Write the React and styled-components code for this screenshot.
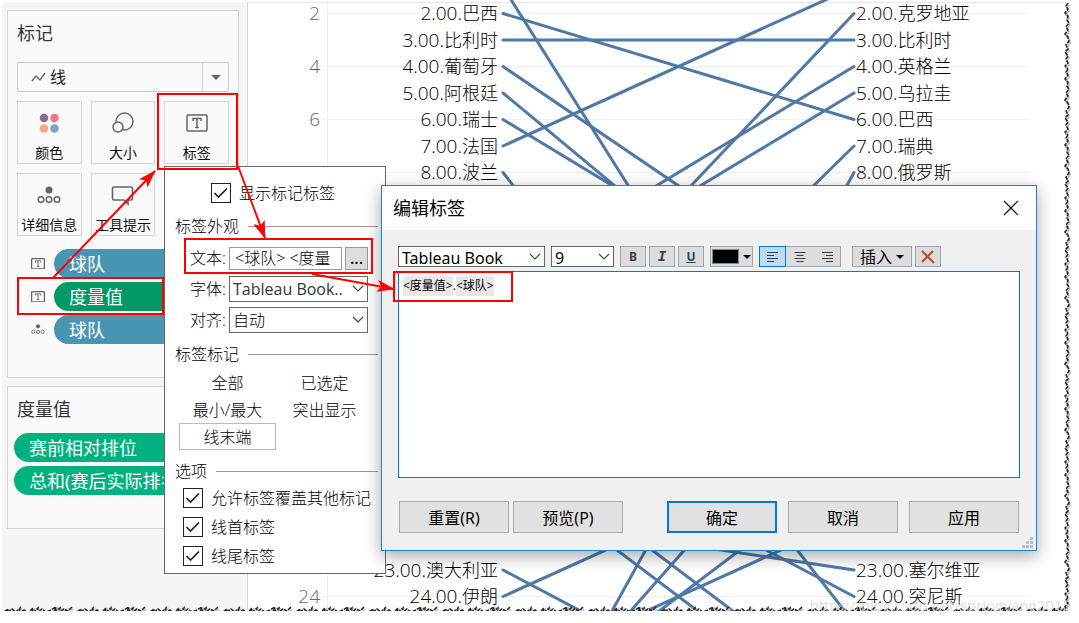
import React from 'react';
import styled, { createGlobalStyle, css } from 'styled-components';

const GlobalStyle = createGlobalStyle`
  * {
    box-sizing: border-box;
  }
  body {
    margin: 0;
    background: #fff;
    color: #222;
    font-family: "Noto Sans", "Noto Sans CJK SC", sans-serif;
    overflow: hidden;
  }
  button, input, select {
    font: inherit;
    color: inherit;
    margin: 0;
  }
`

const Page = styled.div`
    position: relative;
    padding-left: 2px;
    padding-right: 9px;
`

const Workspace = styled.main`
    display: flex;
`

/* ---------- side bar ---------- */

const Sidebar = styled.aside`
    width: 246px;
    flex: none;
    margin-top: 2px;
    padding: 8px 8px 0 5px;
    display: flex;
    flex-direction: column;
    gap: 8px;
    background: #f5f5f5;
    border-right: 1px solid #d8d8d8;
    border-top-left-radius: 4px;
`

const Card = styled.section`
    padding: ${({ $tight }) => ($tight ? '6px' : '9px')};
    padding-top: 8px;
    padding-bottom: 33px;
    border: 1px solid #d4d4d4;
    background: #fafafa;
`

const CardTitle = styled.h2`
    margin: 0;
    padding-left: ${({ $indent }) => ($indent ? '3px' : '0')};
    font-size: 18px;
    font-weight: 400;
    line-height: 28px;
    color: #333;
`

const MarkType = styled.button`
    display: flex;
    align-items: center;
    width: 100%;
    height: 30px;
    margin: 15px 0 9px;
    padding: 0 0 0 13px;
    gap: 4px;
    border: 1px solid #c8c8c8;
    border-radius: 2px;
    background: #fafafa;
    font-size: 16px;
    line-height: 28px;
`

const MarkArrow = styled.span`
    display: flex;
    align-items: center;
    justify-content: center;
    width: 26px;
    height: 28px;
    margin-left: auto;
    border-left: 1px solid #d4d4d4;
`

const Tiles = styled.div`
    display: grid;
    grid-template-columns: repeat(3, 1fr);
    gap: 9px;
`

const Tile = styled.button`
    display: flex;
    flex-direction: column;
    align-items: center;
    justify-content: space-between;
    height: 63px;
    padding: 9px 0 0;
    border: 1px solid #d4d4d4;
    background: #fafafa;
    font-size: 14px;
    line-height: 20px;
    color: #111;
    white-space: nowrap;
`

const TileIcon = styled.span`
    display: flex;
    align-items: center;
    justify-content: center;
    height: 24px;
`

const PillList = styled.ul`
    display: flex;
    flex-direction: column;
    gap: 4px;
    margin: ${({ $top }) => $top} 0 0;
    padding: 0;
    list-style: none;
`

const PillRow = styled.li`
    display: flex;
    align-items: center;
    height: 29px;
`

const PillIcon = styled.span`
    display: flex;
    flex: none;
    width: 37px;
    padding-left: 14px;
`

const Pill = styled.button`
    flex: 1;
    height: 29px;
    padding: 0 15px;
    border: 0;
    border-radius: 15px;
    background: ${({ $color }) => $color};
    color: #fff;
    font-size: 18px;
    line-height: 28px;
    text-align: left;
    white-space: nowrap;
`

/* ---------- chart ---------- */

const Plot = styled.section`
    flex: 1;
    min-width: 0;
    display: grid;
    grid-template-columns: 73px 178px 1fr 216px;
    overflow: hidden;
    height: 611px;
`

const GridLines = styled.svg`
    grid-area: 1 / 1 / 2 / 5;
    width: 100%;
    height: 100%;
`

const LabelColumn = styled.div`
    grid-row: 1;
    grid-column: ${({ $col }) => $col};
    padding: ${({ $align }) => ($align === 'right' ? '0 1px 0 0' : '0 0 0 2px')};
    color: ${({ $muted }) => ($muted ? '#666' : '#000')};
`

const Band = styled.div`
    display: grid;
    grid-template-rows: 1fr 1fr;
    height: 53px;
`

const Label = styled.div`
    display: flex;
    align-items: center;
    justify-content: ${({ $align }) => ($align === 'right' ? 'flex-end' : 'flex-start')};
    font-family: "Open Sans", "Noto Sans CJK SC", sans-serif;
    font-size: 18px;
    font-weight: 300;
    line-height: 26px;
    white-space: nowrap;
`

const Rank = styled.span`
    font-size: 19px;
`

const Lines = styled.svg`
    grid-row: 1;
    grid-column: 3;
    width: 100%;
    height: 100%;
    overflow: visible;
    stroke: #4e79a7;
    stroke-width: 3;
    stroke-linecap: round;
`

/* ---------- label popup ---------- */

const Popup = styled.form`
    position: absolute;
    left: 164px;
    top: 166px;
    width: 222px;
    padding: 11px 7px 3px 10px;
    border: 1px solid #666;
    background: #fff;
    font-family: "Open Sans", "Noto Sans CJK SC", sans-serif;
    font-weight: 300;
    font-size: 16px;
    line-height: 24px;
    color: #000;
`

const Check = styled.label`
    display: flex;
    align-items: center;
    gap: 8px;
    height: 29px;
    padding-left: ${({ $indent }) => $indent};
    white-space: nowrap;
`

const CheckBox = styled.input.attrs({ type: 'checkbox' })`
    appearance: none;
    flex: none;
    width: 20px;
    height: 20px;
    border: 1px solid #222;
    background: #fff;
    &:checked {
      background: #fff url("data:image/svg+xml,%3Csvg xmlns='http://www.w3.org/2000/svg' viewBox='0 0 18 18'%3E%3Cpath d='M2.500 9l4 4L15 4.500' fill='none' stroke='%23222' stroke-width='1.7'/%3E%3C/svg%3E");
    }
`

const Legend = styled.h3`
    display: flex;
    align-items: center;
    gap: 9px;
    margin: ${({ $top }) => $top} 0 0;
    font-size: 16px;
    font-weight: 300;
    line-height: 24px;
    &::after {
      content: '';
      flex: 1;
      height: 1px;
      background: #999;
    }
`

const Fields = styled.div`
    display: grid;
    grid-template-columns: 36px minmax(0, 1fr);
    column-gap: 3px;
    row-gap: 5px;
    margin-top: 7px;
    padding: 0 10px 0 15px;
    align-items: center;
`

const FieldLabel = styled.label`
    white-space: nowrap;
`

const FieldRow = styled.div`
    display: flex;
    gap: 3px;
    height: 26px;
    min-width: 0;
    align-items: center;
`

const TextInput = styled.input`
    flex: 1;
    min-width: 0;
    width: 0;
    height: 23px;
    padding: 0 5px;
    border: 1px solid #999;
    background: #fff;
`

const MoreButton = styled.button`
    flex: none;
    width: 23px;
    height: 23px;
    padding: 0;
    border: 1px solid #999;
    background: #ddd;
    font-weight: 600;
    line-height: 12px;
`

const chevron = css`
    appearance: none;
    background: #fff url("data:image/svg+xml,%3Csvg xmlns='http://www.w3.org/2000/svg' width='12' height='8'%3E%3Cpath d='M1 1l5 5 5-5' fill='none' stroke='%23444' stroke-width='1.2'/%3E%3C/svg%3E") no-repeat right 3px center;
`

const Select = styled.select`
    ${chevron}
    width: ${({ $width }) => $width || '100%'};
    height: ${({ $height }) => $height || '26px'};
    padding: 0 16px 0 3px;
    border: 1px solid #666;
    border-radius: 0;
`

const FontSelect = styled(Select)`
    font-weight: 400;
    color: #333;
`

const Choices = styled.div`
    display: grid;
    grid-template-columns: 97px 97px;
    margin: 3px 0 0 4px;
`

const Choice = styled.button`
    height: 27px;
    padding: 0;
    border: 1px solid ${({ $on }) => ($on ? '#bbb' : 'transparent')};
    background: #fff;
    line-height: 24px;
`

/* ---------- edit dialog ---------- */

const Dialog = styled.div`
    position: absolute;
    left: 381px;
    right: 42px;
    top: 185px;
    border: 1px solid #1883d7;
    background: #f0f0f0;
    box-shadow: 0 5px 16px rgba(0, 0, 0, 0.35);
    font-size: 16px;
    color: #000;
`

const TitleBar = styled.header`
    display: flex;
    align-items: center;
    justify-content: space-between;
    height: 44px;
    padding: 0 17px 0 11px;
    background: #fff;
`

const DialogTitle = styled.h1`
    margin: 0;
    font-size: 18px;
    font-weight: 400;
    line-height: 24px;
`

const CloseButton = styled.button`
    display: flex;
    padding: 0;
    border: 0;
    background: none;
`

const DialogBody = styled.div`
    padding: 16px 16px 17px;
`

const Toolbar = styled.div`
    display: flex;
    align-items: center;
    gap: ${({ $gap }) => $gap || '6px'};
`

const ToolButton = styled.button`
    display: flex;
    align-items: center;
    justify-content: center;
    gap: 4px;
    width: ${({ $width }) => $width || '26px'};
    height: 21px;
    padding: 0;
    border: 1px solid #a5a5a5;
    background: #dcdcdc;
    line-height: 18px;
    white-space: nowrap;
`

const Letter = styled.span`
    font-family: ${({ $serif }) => ($serif ? '"Liberation Mono"' : '"Noto Sans"')}, monospace;
    font-size: ${({ $serif }) => ($serif ? '14px' : '12px')};
    font-weight: 700;
    font-style: ${({ $serif }) => ($serif ? 'italic' : 'normal')};
    text-decoration: ${({ $line }) => ($line ? 'underline' : 'none')};
    color: #374151;
`

const AlignGroup = styled.div`
    display: flex;
    border: 1px solid #a5a5a5;
    margin-right: 5px;
    height: 21px;
    align-items: center;
    background: #dcdcdc;
`

const AlignButton = styled.button`
    display: flex;
    align-items: center;
    justify-content: center;
    width: 27px;
    height: 21px;
    margin-left: ${({ $on }) => ($on ? '-1px' : '0')};
    padding: 0;
    border: ${({ $on }) => ($on ? '1px solid #0078d7' : '0')};
    background: ${({ $on }) => ($on ? '#bddcf4' : 'transparent')};
`

const Swatch = styled.span`
    width: 27px;
    height: 15px;
    border: 1px solid #888;
    background: #000;
`

const Editor = styled.div`
    height: 207px;
    margin-top: 4px;
    padding: 4px;
    border: 1px solid #0078d7;
    background: #fff;
    font-size: 12px;
    line-height: 20px;
    outline: none;
`

const Token = styled.span`
    display: inline-block;
    background: #e8e8e8;
`

const Actions = styled.footer`
    display: flex;
    gap: 11px;
    margin-top: 23px;
    padding: 0 1px;
`

const ActionButton = styled.button`
    width: 110px;
    height: 32px;
    padding: 1px 0 0;
    border: ${({ $primary }) => ($primary ? '2px solid #0078d7' : '1px solid #adadad')};
    background: #e1e1e1;
    line-height: 24px;
`

const ActionPair = styled.div`
    display: flex;
    gap: 4px;
    margin-right: auto;
`

const Grip = styled.svg`
    position: absolute;
    right: 3px;
    bottom: 2px;
`

/* ---------- decoration ---------- */

const Marks = styled.svg`
    position: absolute;
    left: 0;
    top: 0;
    pointer-events: none;
`

const TornRight = styled.svg`
    position: absolute;
    right: 6px;
    top: 3px;
    height: 606px;
`

const TornBottom = styled.svg`
    position: absolute;
    left: 4px;
    top: 606px;
    width: calc(100% - 14px);
`

const Watermark = styled.span`
    position: absolute;
    right: 8px;
    bottom: -6px;
    font-family: "Open Sans", sans-serif;
    font-size: 15px;
    line-height: 24px;
    color: rgba(200, 200, 200, 0.6);
`

const leftTeams = {
  2: '巴西', 3: '比利时', 4: '葡萄牙', 5: '阿根廷', 6: '瑞士', 7: '法国', 8: '波兰',
  23: '澳大利亚', 24: '伊朗',
}

const rightTeams = {
  2: '克罗地亚', 3: '比利时', 4: '英格兰', 5: '乌拉圭', 6: '巴西', 7: '瑞典', 8: '俄罗斯',
  23: '塞尔维亚', 24: '突尼斯',
}

// [rank before, rank after]
const moves = [
  [1, 22], [2, 6], [3, 3], [4, 13], [5, 16], [6, 14], [7, 1], [8, 25],
  [16, 2], [12, 4], [13, 5], [20, 7], [32, 8], [23, 30], [24, 18], [19, 29],
  [18, 28], [30, 15], [29, 19], [27, 21], [21, 23], [17, 24],
]

const bands = [2, 4, 6, 8, 10, 12, 14, 16, 18, 20, 22, 24]
const rankY = (rank) => 13.5 + (rank - 2) * 26.5

const TextMarkIcon = ({ size = 22 }) => (
  <svg width={size} height={size * 0.82} viewBox="0 0 22 18" fill="none">
    <rect x="1" y="1" width="20" height="16" rx="1" stroke="#666" strokeWidth={size > 20 ? 1.5 : 2} />
    <path d="M7 7V4.500h8V7M11 4.500v9M9 13.500h4" stroke="#666" strokeWidth="1.5" />
  </svg>
)

const DetailIcon = ({ size = 24 }) => (
  <svg width={size} height={size * 0.75} viewBox="0 0 24 18" fill="none" stroke="#666" strokeWidth="1.5">
    <circle cx="12" cy="4" r="3.5" fill="#666" stroke="none" />
    <circle cx="4" cy="13.500" r="2.8" />
    <circle cx="12" cy="13.500" r="2.8" />
    <circle cx="20" cy="13.500" r="2.8" />
  </svg>
)

const ColorIcon = () => (
  <svg width="22" height="22" viewBox="0 0 22 22">
    <circle cx="6" cy="6" r="4.3" fill="#866b96" />
    <circle cx="16.5" cy="6" r="4.3" fill="#fb7185" />
    <circle cx="6" cy="16.5" r="4.3" fill="#f4a77c" />
    <circle cx="16.5" cy="16.5" r="4.3" fill="#7ea2cc" />
  </svg>
)

const SizeIcon = () => (
  <svg width="24" height="24" viewBox="0 0 24 24" stroke="#666" strokeWidth="1.5">
    <circle cx="13.500" cy="10.500" r="8.500" fill="none" />
    <circle cx="7" cy="16" r="5" fill="#fafafa" />
  </svg>
)

const TooltipIcon = () => (
  <svg width="24" height="22" viewBox="0 0 24 22" fill="none" stroke="#666" strokeWidth="1.6">
    <path d="M3 3h17a1.500 1.500 0 0 1 1.500 1.500v10a1.500 1.500 0 0 1-1.500 1.500h-3v4l-4-4H3a1.500 1.500 0 0 1-1.500-1.500v-10A1.500 1.500 0 0 1 3 3z" />
  </svg>
)

const Caret = ({ color = '#000', size = 8 }) => (
  <svg width={size} height={size / 2} viewBox="0 0 8 4"><path d="M0 0h8L4 4z" fill={color} /></svg>
)

const AlignIcon = ({ kind }) => (
  <svg width="12" height="10" stroke="#374151" strokeWidth="1">
    {[11, 7, 11, 7].map((w, i) => {
      const x = kind === 'left' ? 0 : kind === 'right' ? 12 - w : (12 - w) / 2
      return <line key={i} x1={x} x2={x + w} y1={i * 3 + 0.5} y2={i * 3 + 0.5} />
    })}
  </svg>
)

const TeamLabels = ({ teams, col, align }) => (
  <LabelColumn $col={col} $align={align}>
    {bands.map((rank) => (
      <Band key={rank}>
        {[rank, rank + 1].map((r) => (
          <Label key={r} $align={align}>
            {teams[r] && <><Rank>{r}.00.</Rank>{teams[r]}</>}
          </Label>
        ))}
      </Band>
    ))}
  </LabelColumn>
)

const Chart = () => (
  <Plot>
    <GridLines>
      <line x1="0" x2="100%" y1="2.5" y2="2.5" stroke="#e8e8e8" />
      <line x1="79.500" x2="79.500" y1="3" y2="610" stroke="#eee" />
      <svg x="75" width="100%" overflow="visible">
        {bands.map((rank) => (
          <line key={rank} x1="0" x2="86%" y1={rankY(rank)} y2={rankY(rank)} stroke="#f0f0f0" />
        ))}
      </svg>
    </GridLines>
    <LabelColumn $col={1} $align="right" $muted>
      {bands.map((rank) => (
        <Band key={rank}>
          <Label $align="right">{(rank < 8 || rank > 22) && <Rank>{rank}</Rank>}</Label>
        </Band>
      ))}
    </LabelColumn>
    <TeamLabels teams={leftTeams} col={2} align="right" />
    <Lines>
      {moves.map(([from, to]) => (
        <line key={from} x1="4" x2="100%" y1={rankY(from)} y2={rankY(to)} />
      ))}
    </Lines>
    <TeamLabels teams={rightTeams} col={4} align="left" />
  </Plot>
)

const MarksCard = () => (
  <Card>
    <CardTitle>标记</CardTitle>
    <MarkType>
      <svg width="15" height="10" fill="none" stroke="#666" strokeWidth="1.4">
        <path d="M1 9l4-5 4 4 5-7" />
      </svg>
      线
      <MarkArrow><Caret color="#666" size={10} /></MarkArrow>
    </MarkType>
    <Tiles>
      <Tile><TileIcon><ColorIcon /></TileIcon>颜色</Tile>
      <Tile><TileIcon><SizeIcon /></TileIcon>大小</Tile>
      <Tile><TileIcon><TextMarkIcon /></TileIcon>标签</Tile>
      <Tile><TileIcon><DetailIcon /></TileIcon>详细信息</Tile>
      <Tile><TileIcon><TooltipIcon /></TileIcon>工具提示</Tile>
    </Tiles>
    <PillList $top="13px">
      <PillRow><PillIcon><TextMarkIcon size={14} /></PillIcon><Pill $color="#4996b2">球队</Pill></PillRow>
      <PillRow><PillIcon><TextMarkIcon size={14} /></PillIcon><Pill $color="#009966">度量值</Pill></PillRow>
      <PillRow><PillIcon><DetailIcon size={14} /></PillIcon><Pill $color="#4996b2">球队</Pill></PillRow>
    </PillList>
  </Card>
)

const LabelPopup = () => (
  <Popup>
    <Check $indent="36px"><CheckBox defaultChecked />显示标记标签</Check>
    <Legend $top="7px">标签外观</Legend>
    <Fields>
      <FieldLabel htmlFor="text">文本:</FieldLabel>
      <FieldRow>
        <TextInput id="text" defaultValue="<球队> <度量" />
        <MoreButton type="button">...</MoreButton>
      </FieldRow>
      <FieldLabel htmlFor="font">字体:</FieldLabel>
      <FontSelect id="font"><option>Tableau Book..</option></FontSelect>
      <FieldLabel htmlFor="align">对齐:</FieldLabel>
      <Select id="align"><option>自动</option></Select>
    </Fields>
    <Legend $top="9px">标签标记</Legend>
    <Choices>
      <Choice type="button">全部</Choice>
      <Choice type="button">已选定</Choice>
      <Choice type="button">最小/最大</Choice>
      <Choice type="button">突出显示</Choice>
      <Choice type="button" $on>线末端</Choice>
    </Choices>
    <Legend $top="9px">选项</Legend>
    <Check $indent="8px"><CheckBox defaultChecked />允许标签覆盖其他标记</Check>
    <Check $indent="8px"><CheckBox defaultChecked />线首标签</Check>
    <Check $indent="8px"><CheckBox defaultChecked />线尾标签</Check>
  </Popup>
)

const EditDialog = () => (
  <Dialog role="dialog" aria-labelledby="dialog-title">
    <TitleBar>
      <DialogTitle id="dialog-title">编辑标签</DialogTitle>
      <CloseButton aria-label="关闭">
        <svg width="16" height="16" stroke="#000" strokeWidth="1.2"><path d="M1 1l14 14M15 1L1 15" /></svg>
      </CloseButton>
    </TitleBar>
    <DialogBody>
      <Toolbar>
        <Select $width="147px" $height="21px" aria-label="字体"><option>Tableau Book</option></Select>
        <Select $width="63px" $height="21px" aria-label="字号"><option>9</option></Select>
        <Toolbar $gap="3px">
          <ToolButton><Letter>B</Letter></ToolButton>
          <ToolButton><Letter $serif>I</Letter></ToolButton>
          <ToolButton><Letter $line>U</Letter></ToolButton>
        </Toolbar>
        <ToolButton $width="43px" aria-label="颜色"><Swatch /><Caret /></ToolButton>
        <AlignGroup>
          <AlignButton $on aria-label="左对齐"><AlignIcon kind="left" /></AlignButton>
          <AlignButton aria-label="居中"><AlignIcon kind="center" /></AlignButton>
          <AlignButton aria-label="右对齐"><AlignIcon kind="right" /></AlignButton>
        </AlignGroup>
        <Toolbar $gap="3px">
          <ToolButton $width="60px">插入<Caret /></ToolButton>
          <ToolButton aria-label="清除">
            <svg width="14" height="14" stroke="#b85031" strokeWidth="2.200"><path d="M1 1l12 12M12 1L1 12" /></svg>
          </ToolButton>
        </Toolbar>
      </Toolbar>
      <Editor contentEditable suppressContentEditableWarning role="textbox" aria-label="标签">
        <Token>&lt;度量值&gt;</Token>.<Token>&lt;球队&gt;</Token>
      </Editor>
      <Actions>
        <ActionPair>
          <ActionButton>重置(R)</ActionButton>
          <ActionButton>预览(P)</ActionButton>
        </ActionPair>
        <ActionButton $primary>确定</ActionButton>
        <ActionButton>取消</ActionButton>
        <ActionButton>应用</ActionButton>
      </Actions>
    </DialogBody>
    <Grip width="11" height="11" fill="#bfbfbf">
      <path d="M8 0h3v3h-3zM4 4h3v3h-3zM8 4h3v3h-3zM0 8h3v3h-3zM4 8h3v3h-3zM8 8h3v3h-3z" />
    </Grip>
  </Dialog>
)

const Annotations = () => (
  <Marks width="520" height="330" fill="none" stroke="#f00" strokeWidth="2">
    <defs>
      <marker id="head" markerWidth="18" markerHeight="12" refX="17" refY="6" orient="auto" markerUnits="userSpaceOnUse">
        <path d="M0 0l18 6-18 6 4-6z" fill="#f00" stroke="none" />
      </marker>
    </defs>
    <rect x="158" y="94" width="79" height="75" />
    <rect x="18" y="278" width="145" height="36" />
    <rect x="185" y="239" width="187" height="34" />
    <rect x="394" y="272" width="118" height="29" />
    <path d="M53 278L155 171" markerEnd="url(#head)" />
    <path d="M238 166L265 238" markerEnd="url(#head)" />
    <path d="M312 274L394 289" markerEnd="url(#head)" />
  </Marks>
)

const tearDown = 'M5 0l-2 3 2 3-3 4 3 3-1 4 2 3-3 4 2 3-3 4 3 3 1 4-3 4 2 4-3 3 3 4-2 3 2 4-3 3 3 3'
const tearAcross = 'M0 6l4-3-1 4 5-4 4 3 4-4-1 5 5-3 4 3 5-5-1 5 6-5-1 5 5-4 4 3 5-2 5-3-2 5 6-4-1 5 5-4 4 2 4-4'

const Tear = ({ id, d, fill, width, height }) => (
  <>
    <defs>
      <pattern id={id} width={width} height={height} patternUnits="userSpaceOnUse">
        <path d={`${d}${fill}`} fill="#fff" />
        <g fill="none">
          <path d={d} transform="translate(1 2)" stroke="#c4c4c4" strokeWidth="2" />
          <path d={d} stroke="#222" strokeWidth="1.5" strokeDasharray="4 1" />
        </g>
      </pattern>
    </defs>
    <rect width="100%" height="100%" fill={`url(#${id})`} />
  </>
)

const TornEdges = () => (
  <>
    <TornRight width="10">
      <Tear id="tear-v" d={tearDown} fill="H10V0z" width={10} height={66} />
    </TornRight>
    <TornBottom height="16">
      <Tear id="tear-h" d={tearAcross} fill="V16H0z" width={73} height={16} />
    </TornBottom>
  </>
)

const App = () => {
  return <Page>
      <GlobalStyle />
      <Workspace>
          <Sidebar>
              <MarksCard />
              <Card $tight>
                  <CardTitle $indent>度量值</CardTitle>
                  <PillList $top="10px">
                      <PillRow><Pill $color="#00b180">赛前相对排位</Pill></PillRow>
                      <PillRow><Pill $color="#00b180">总和(赛后实际排名)</Pill></PillRow>
                  </PillList>
              </Card>
          </Sidebar>
          <Chart />
      </Workspace>
      <LabelPopup />
      <EditDialog />
      <Annotations />
      <TornEdges />
      <Watermark>https://blog.csdn.net/springyang2015</Watermark>
  </Page>;
};

export default App;
